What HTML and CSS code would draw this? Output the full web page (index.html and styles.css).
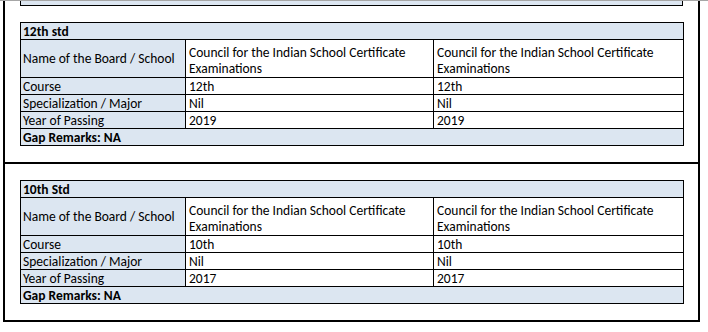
FILE: index.html
```html
<!DOCTYPE html>
<html>
<head>
<meta charset="utf-8">
<link rel="stylesheet" href="styles.css">
</head>
<body>
<div class="topline"></div>
<div class="frame">
  <section class="block first">
    <div class="prev-tail"></div>
    <table class="edu">
      <colgroup><col class="c-label"><col class="c-val"><col class="c-val2"></colgroup>
      <tr><td class="head" colspan="3">12th std</td></tr>
      <tr class="tall"><td class="label mid">Name of the Board / School</td><td class="val bottom">Council for the Indian School Certificate Examinations</td><td class="val bottom">Council for the Indian School Certificate Examinations</td></tr>
      <tr><td class="label">Course</td><td class="val">12th</td><td class="val">12th</td></tr>
      <tr><td class="label">Specialization / Major</td><td class="val">Nil</td><td class="val">Nil</td></tr>
      <tr><td class="label">Year of Passing</td><td class="val">2019</td><td class="val">2019</td></tr>
      <tr><td class="head" colspan="3">Gap Remarks: NA</td></tr>
    </table>
  </section>
  <section class="block">
    <table class="edu">
      <colgroup><col class="c-label"><col class="c-val"><col class="c-val2"></colgroup>
      <tr><td class="head" colspan="3">10th Std</td></tr>
      <tr class="tall"><td class="label mid">Name of the Board / School</td><td class="val bottom">Council for the Indian School Certificate Examinations</td><td class="val bottom">Council for the Indian School Certificate Examinations</td></tr>
      <tr><td class="label">Course</td><td class="val">10th</td><td class="val">10th</td></tr>
      <tr><td class="label">Specialization / Major</td><td class="val">Nil</td><td class="val">Nil</td></tr>
      <tr><td class="label">Year of Passing</td><td class="val">2017</td><td class="val">2017</td></tr>
      <tr><td class="head" colspan="3">Gap Remarks: NA</td></tr>
    </table>
  </section>
</div>
</body>
</html>
```
FILE: styles.css
```css
html, body {
  margin: 0;
  padding: 0;
  background: #fff;
}
body {
  font-family: Carlito, "Open Sans", "Liberation Sans", sans-serif;
  font-size: 13.5px;
  color: #000;
}
.topline {
  height: 1px;
  background: #a6a6a6;
}
.frame {
  margin-left: 3px;
  width: 693px;
  border: 2px solid #000;
  border-top: none;
}
.block {
  padding: 16px 15px 16px 15px;
}
.block.first {
  padding-top: 0;
  border-bottom: 2px solid #000;
}
.prev-tail {
  height: 4px;
  background: #dce6f1;
  border: 1px solid #000;
  border-top: none;
  margin-bottom: 16px;
}
.edu {
  width: 663px;
  border-collapse: collapse;
  table-layout: fixed;
}
.c-label { width: 165px; }
.c-val { width: 248px; }
.c-val2 { width: 250px; }
.edu td {
  border: 1px solid #000;
  height: 15px;
  line-height: 15px;
  padding: 1px 2px 0 2px;
  white-space: normal;
}
.edu .head {
  background: #dce6f1;
  font-weight: bold;
}
.edu .label {
  background: #dce6f1;
}
.edu .val {
  background: #fff;
  padding-left: 3px;
}
.edu .tall td {
  height: 37px;
  line-height: 16px;
  padding-top: 0;
}
.edu .mid { vertical-align: middle; }
.edu .bottom { vertical-align: bottom; }
```
